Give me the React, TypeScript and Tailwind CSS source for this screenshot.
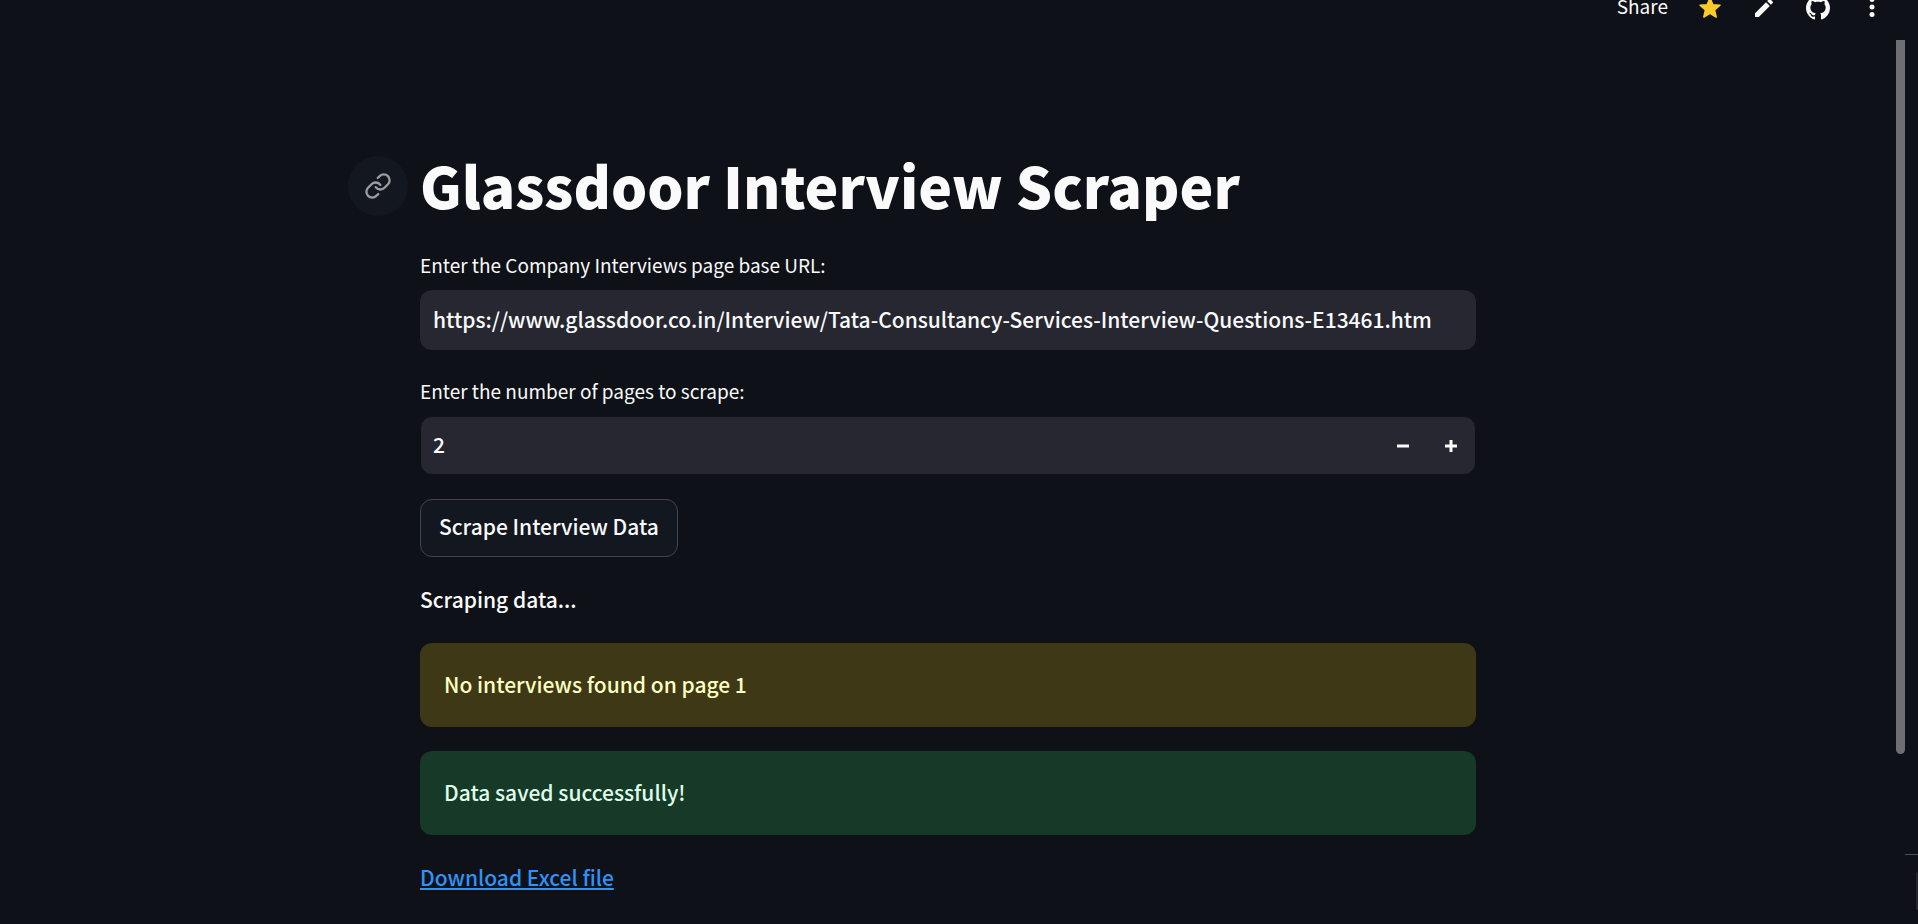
import { useState } from "react";
import type { ReactNode } from "react";

function Header() {
  return (
    <header className="flex h-4 items-center justify-end gap-[30px] pr-[34px] text-[#fafafa]">
      <button type="button" className="pb-1 text-[19px] leading-4 font-normal">
        Share
      </button>
      <button type="button" aria-label="Favorite">
        <svg viewBox="0 0 24 24" className="size-6 fill-[#ffca28]">
          <path
            d="M12 17.27L18.18 21l-1.64-7.03L22 9.24l-7.19-.61L12 2 9.19 8.63 2 9.24l5.46 4.73L5.82 21z"
            stroke="#ffca28"
            strokeWidth="1.5"
            strokeLinejoin="round"
          />
        </svg>
      </button>
      <button type="button" aria-label="Edit source">
        <svg viewBox="0 0 24 24" className="size-6 fill-current">
          <path d="M3 17.25V21h3.75L17.81 9.94l-3.75-3.75L3 17.25zM20.71 7.04a1 1 0 0 0 0-1.41l-2.34-2.34a1 1 0 0 0-1.41 0l-1.83 1.83 3.75 3.75 1.83-1.83z" />
        </svg>
      </button>
      <a href="#source" aria-label="View on GitHub">
        <svg viewBox="0 0 16 16" className="size-6 fill-current">
          <path d="M8 0C3.58 0 0 3.58 0 8c0 3.54 2.29 6.53 5.47 7.59.4.07.55-.17.55-.38 0-.19-.01-.82-.01-1.49-2.01.37-2.53-.49-2.69-.94-.09-.23-.48-.94-.82-1.13-.28-.15-.68-.52-.01-.53.63-.01 1.08.58 1.23.82.72 1.21 1.87.87 2.33.66.07-.52.28-.87.51-1.07-1.78-.2-3.64-.89-3.64-3.95 0-.87.31-1.59.82-2.15-.08-.2-.36-1.02.08-2.12 0 0 .67-.21 2.2.82.64-.18 1.32-.27 2-.27s1.36.09 2 .27c1.53-1.04 2.2-.82 2.2-.82.44 1.1.16 1.92.08 2.12.51.56.82 1.27.82 2.15 0 3.07-1.87 3.75-3.65 3.95.29.25.54.73.54 1.48 0 1.07-.01 1.93-.01 2.2 0 .21.15.46.55.38A8.01 8.01 0 0 0 16 8c0-4.42-3.58-8-8-8z" />
        </svg>
      </a>
      <button type="button" aria-label="Main menu">
        <svg viewBox="0 0 24 24" className="size-6 fill-current">
          <circle cx="12" cy="3.5" r="2.5" />
          <circle cx="12" cy="11" r="2.5" />
          <circle cx="12" cy="18.5" r="2.5" />
        </svg>
      </button>
    </header>
  );
}

function Alert({ className, children }: { className: string; children: ReactNode }) {
  return (
    <div role="alert" className={`rounded-xl px-6 pt-[22px] pb-6 leading-[38px] ${className}`}>
      {children}
    </div>
  );
}

export default function App() {
  const [url, setUrl] = useState(
    "https://www.glassdoor.co.in/Interview/Tata-Consultancy-Services-Interview-Questions-E13461.htm",
  );
  const [pages, setPages] = useState(2);

  return (
    <div className="relative min-h-screen overflow-hidden bg-[#0e1117] font-['Noto_Sans_CJK_SC','Noto_Sans',sans-serif] text-[21px] font-medium text-[#fafafa]">
      <Header />
      <main className="pr-[22px]">
        <div className="mx-auto flex max-w-[1056px] flex-col gap-6 pt-[134px]">
          <div className="-ml-[72px] flex items-center gap-3 pb-0.5">
            <a
              href="#glassdoor-interview-scraper"
              aria-label="Link to heading"
              className="flex size-[60px] shrink-0 items-center justify-center rounded-full bg-[#131720] text-[#9c9d9f]"
            >
              <svg
                viewBox="0 0 24 24"
                className="size-7 fill-none stroke-current stroke-2"
                strokeLinecap="round"
                strokeLinejoin="round"
              >
                <path d="M10 13a5 5 0 0 0 7.54.54l3-3a5 5 0 0 0-7.07-7.07l-1.72 1.71" />
                <path d="M14 11a5 5 0 0 0-7.54-.54l-3 3a5 5 0 0 0 7.07 7.07l1.71-1.71" />
              </svg>
            </a>
            <h1
              id="glassdoor-interview-scraper"
              className="pb-1 text-[57px] leading-[68px] font-black"
            >
              Glassdoor Interview Scraper
            </h1>
          </div>

          <div className="flex flex-col gap-2">
            <label htmlFor="url" className="text-[19px] leading-[34px] font-normal">
              Enter the Company Interviews page base URL:
            </label>
            <input
              id="url"
              type="text"
              value={url}
              onChange={(e) => setUrl(e.target.value)}
              className="h-[60px] w-full rounded-xl bg-[#262730] px-[13px] pb-0.5 outline-none"
            />
          </div>

          <div className="flex flex-col gap-2">
            <label htmlFor="pages" className="text-[19px] leading-[34px] font-normal">
              Enter the number of pages to scrape:
            </label>
            <div className="flex h-[59px] rounded-xl border border-[#0e1117] bg-[#262730]">
              <input
                id="pages"
                type="text"
                inputMode="numeric"
                value={pages}
                onChange={(e) => setPages(Number(e.target.value) || 1)}
                className="min-w-0 flex-1 px-3 pb-0.5 outline-none"
              />
              <button
                type="button"
                aria-label="Decrease pages"
                onClick={() => setPages(Math.max(1, pages - 1))}
                className="flex w-12 items-center justify-center"
              >
                <svg viewBox="0 0 12 12" className="size-3 fill-current">
                  <path d="M0 4.5h12v3H0z" />
                </svg>
              </button>
              <button
                type="button"
                aria-label="Increase pages"
                onClick={() => setPages(pages + 1)}
                className="flex w-12 items-center justify-center"
              >
                <svg viewBox="0 0 12 12" className="size-3 fill-current">
                  <path d="M4.5 0h3v4.5H12v3H7.5V12h-3V7.5H0v-3h4.5z" />
                </svg>
              </button>
            </div>
          </div>

          <button
            type="button"
            className="h-[58px] self-start rounded-xl border border-[#41444c] bg-[#131720] px-[18px] pb-0.5"
          >
            Scrape Interview Data
          </button>

          <p className="pb-0.5 leading-9">Scraping data...</p>

          <Alert className="bg-[#3e3816] text-[#ffffc2]">No interviews found on page 1</Alert>
          <Alert className="bg-[#173928] text-[#dffde9]">Data saved successfully!</Alert>

          <p className="pb-0.5 leading-9">
            <a href="#download" className="text-[#2f93f5] underline decoration-2 underline-offset-2">
              Download Excel file
            </a>
          </p>
        </div>
      </main>

      <div className="absolute top-10 right-[13px] h-[714px] w-[9px] rounded-b-full bg-[#6e6f72]" />
      <div className="absolute top-[854px] right-0 h-px w-[13px] bg-[#4a4f5c]" />
      <div className="absolute top-[872px] right-0 h-[38px] w-0.5 rounded-l-full bg-[#262730]" />
    </div>
  );
}
